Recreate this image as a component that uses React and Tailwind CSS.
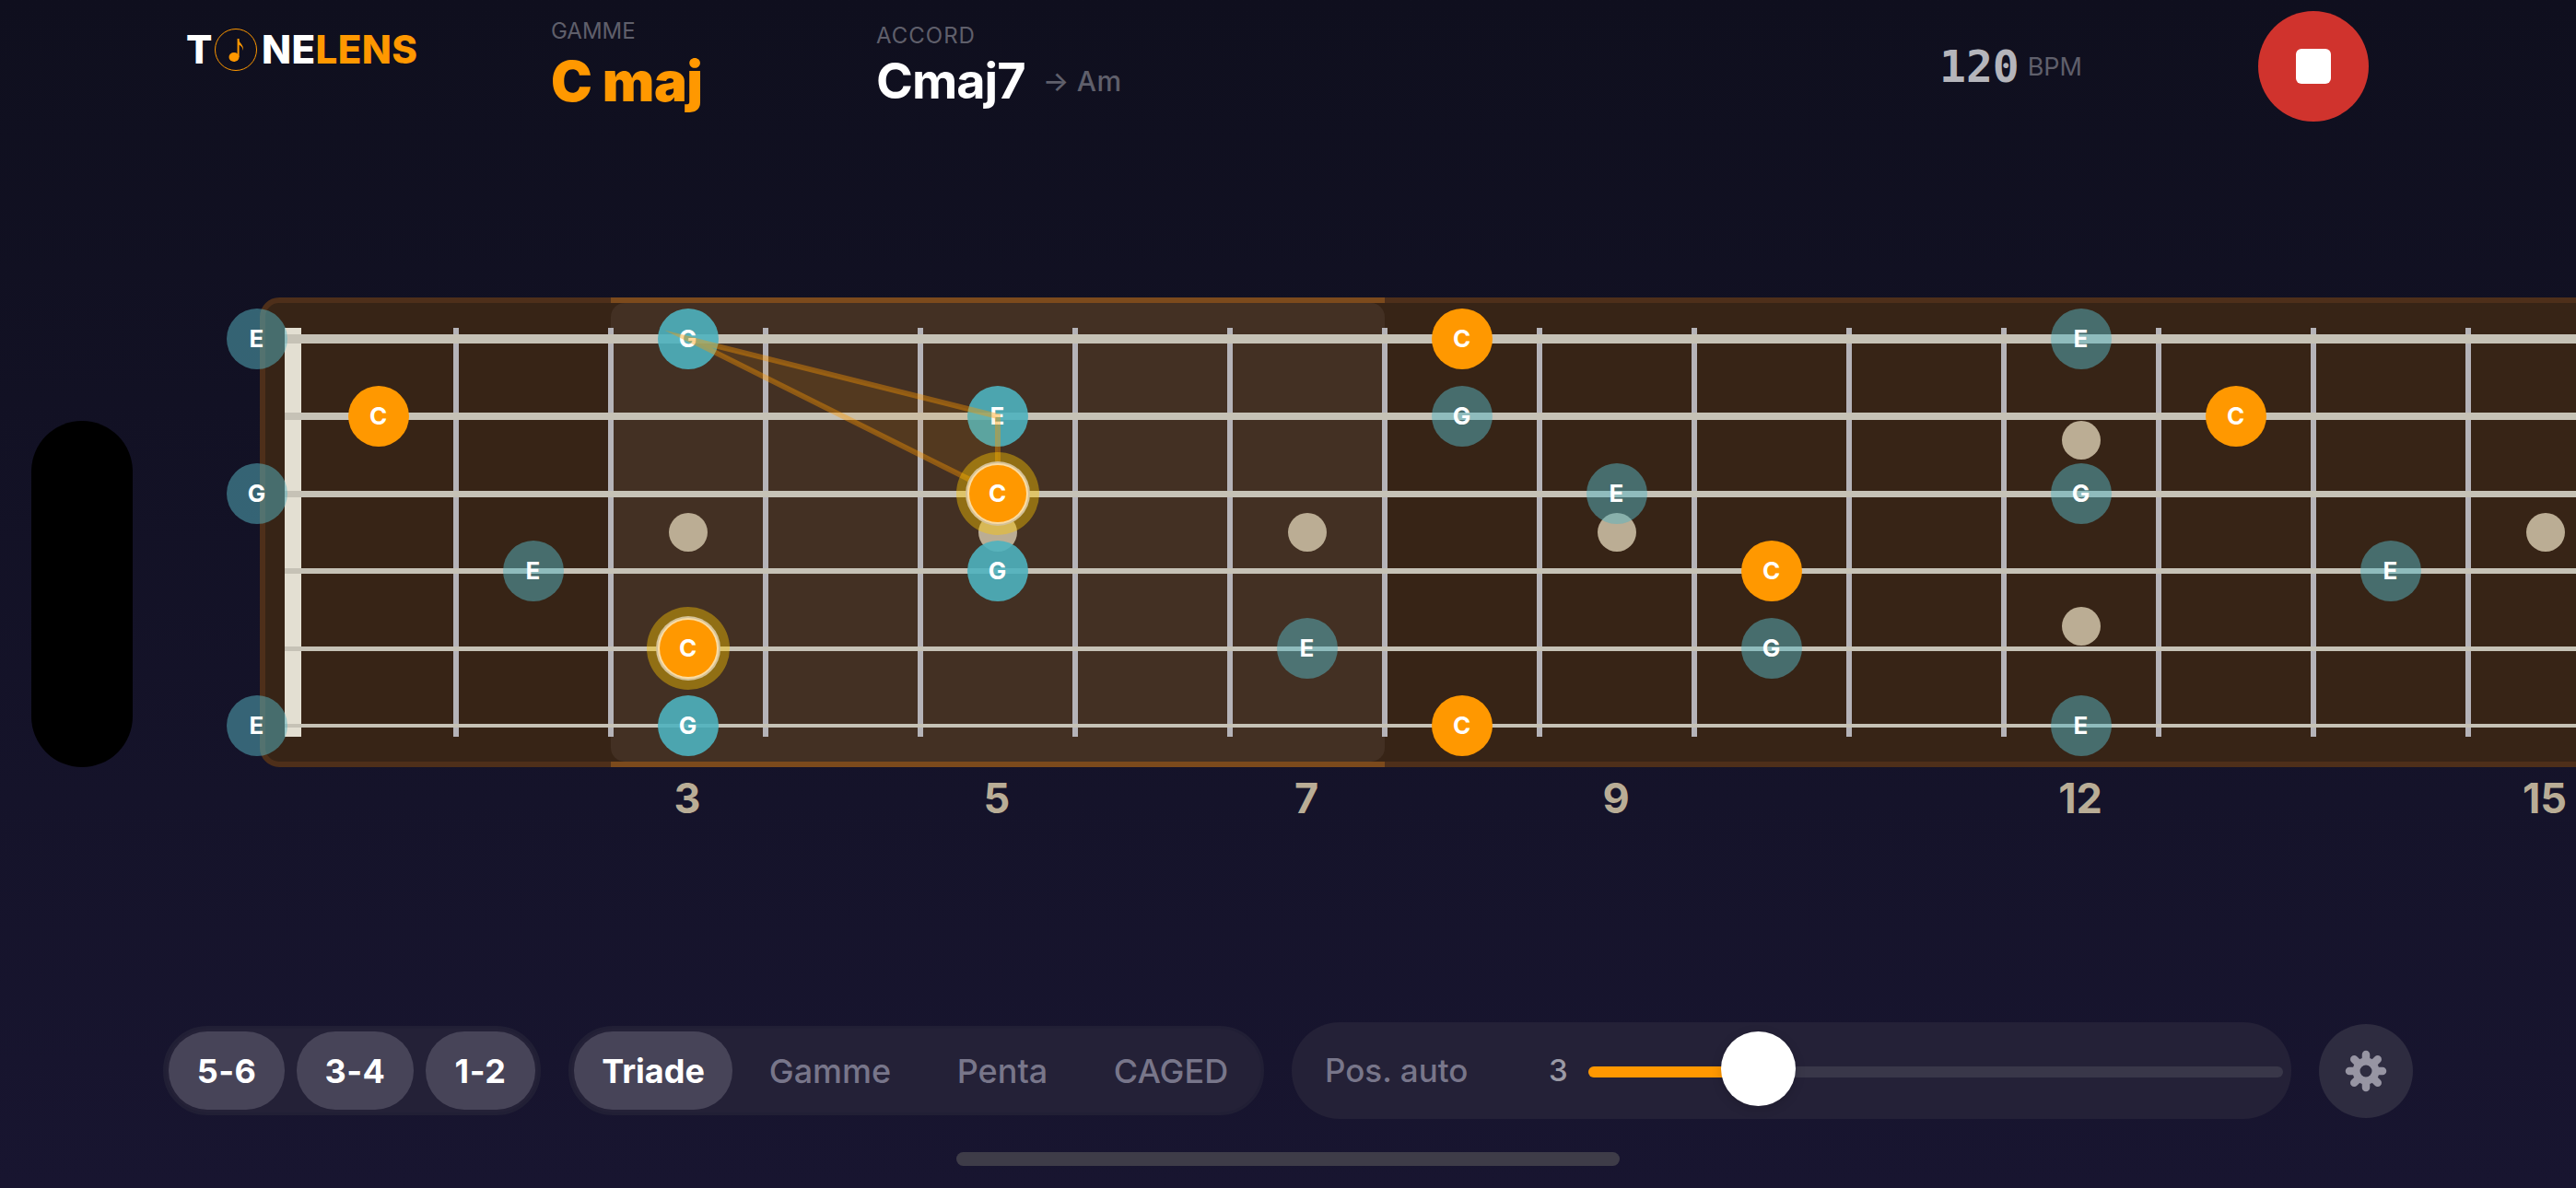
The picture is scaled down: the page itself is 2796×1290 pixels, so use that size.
import React from "react";

const OX = 288;
const OY = 329;
const stringHeights = [10, 8, 7, 6, 5, 4];
const stringY = (s) => 368 + 84 * s - OY;
const regionX = (r) => (r === 0 ? 279 : 411 + 168 * (r - 1)) - OX;
const fretLines = Array.from({ length: 14 }, (_, i) => i);

const dim = [
  [0, 0, "E"], [0, 12, "E"], [1, 8, "G"], [2, 0, "G"], [2, 9, "E"], [2, 12, "G"],
  [3, 2, "E"], [3, 14, "E"], [4, 7, "E"], [4, 10, "G"], [5, 0, "E"], [5, 12, "E"],
];
const active = [[0, 3, "G"], [1, 5, "E"], [3, 5, "G"], [5, 3, "G"]];
const orange = [[0, 8, "C"], [1, 1, "C"], [1, 13, "C"], [3, 10, "C"], [5, 8, "C"]];
const halo = [[2, 5, "C"], [4, 3, "C"]];
const markers = [
  [3, 578], [5, 578], [7, 578], [9, 578], [15, 578], [12, 478], [12, 680],
];
const labels = [3, 5, 7, 9, 12, 15];

function Note({ s, r, n, cls }) {
  return (
    <div
      className={`absolute flex items-center justify-center rounded-full text-[26px] font-bold leading-none text-white ${cls}`}
      style={{ left: regionX(r), top: stringY(s), transform: "translate(-50%,-50%)" }}
    >
      <span className="-ml-[1px]">{n}</span>
    </div>
  );
}

function Gear() {
  const teeth = [0, 45, 90, 135, 180, 225, 270, 315];
  return (
    <svg width="46" height="46" viewBox="-23 -23 46 46" fill="none" stroke="#9795a3">
      <circle r="10.5" strokeWidth="8" />
      {teeth.map((a) => (
        <line key={a} x1="0" y1="-13" x2="0" y2="-18" strokeWidth="8.5" strokeLinecap="round" transform={`rotate(${a})`} />
      ))}
    </svg>
  );
}

function Logo() {
  return (
    <div className="flex h-[108px] w-[395px] items-center text-[42px] font-extrabold leading-none tracking-[0.4px] text-white">
      <span className="-ml-[1px] w-[27px]">T</span>
      <span className="ml-[4px] mr-[5px] flex h-[46px] w-[46px] items-center justify-center rounded-full border-[1.5px] border-[#ff9800]">
        <svg width="24" height="30" viewBox="0 0 24 30" fill="#ff9800">
          <ellipse cx="10" cy="23" rx="5.5" ry="5" />
          <rect x="13.6" y="3" width="2" height="20" />
          <path d="M15 3c0 5 6 6 5 13-.6-4-3-6-5-6.500z" />
        </svg>
      </span>
      <span>NE</span>
      <span className="text-[#ff9800]">LENS</span>
    </div>
  );
}

function Header() {
  return (
    <header className="flex h-[144px] items-start pl-[203px]">
      <Logo />
      <div className="w-[353px] pt-[22px]">
        <div className="text-[24px] leading-[24px] text-[#5f5f6b]">GAMME</div>
        <div className="mt-[12px] text-[60px] font-black leading-[60px] tracking-[-0.5px] text-[#ff9800]">C maj</div>
      </div>
      <div className="w-[1157px] pt-[27px]">
        <div className="text-[24px] leading-[24px] tracking-[1px] text-[#5f5f6b]">ACCORD</div>
        <div className="mt-[7px] flex h-[60px] items-center">
          <span className="text-[54px] font-bold leading-none tracking-[-1px] text-white">Cmaj7</span>
          <span className="ml-[19px] text-[30px] font-medium leading-none tracking-[0.3px] text-[#5f5f6b]">→ Am</span>
        </div>
      </div>
      <div className="flex h-[144px] w-[343px] items-center">
        <span className="-ml-[3px] font-['DejaVu_Sans_Mono',monospace] text-[48px] font-bold leading-none text-[#b5b5bb]">120</span>
        <span className="ml-[9px] text-[27px] leading-none text-[#5f5f6b]">BPM</span>
      </div>
      <button className="mt-[12px] flex h-[120px] w-[120px] items-center justify-center rounded-full bg-[#d0332d]">
        <span className="h-[38px] w-[38px] rounded-[6px] bg-white" />
      </button>
    </header>
  );
}

function Fretboard() {
  return (
    <div className="relative ml-[282px] mt-[179px] h-[510px] w-[2600px] rounded-[21px] border-[6px] border-[#4e2f1a] bg-[#372416]">
      <div className="absolute -bottom-[6px] -top-[6px] left-[375px] w-[840px] border-y-[6px] border-[#7c4a1c]">
        <div className="h-full rounded-[15px] bg-[#433023]" />
      </div>

      <div className="absolute left-[21px] top-[27px] h-[444px] w-[18px] bg-[#e3dfd2]" />
      {fretLines.map((i) => (
        <div key={i} className="absolute top-[27px] h-[444px] w-[6px] bg-[#b5b3b8]" style={{ left: 204 + 168 * i }} />
      ))}
      {stringHeights.map((h, s) => (
        <div
          key={s}
          className="absolute left-[21px] right-0 bg-[#c6c2b6]"
          style={{ top: stringY(s) - h / 2, height: h }}
        />
      ))}

      {markers.map(([r, y], i) => (
        <div
          key={i}
          className="absolute h-[42px] w-[42px] rounded-full bg-[#bbad94]"
          style={{ left: regionX(r) - 21, top: y - OY - 21 }}
        />
      ))}

      {dim.map(([s, r, n], i) => (
        <Note key={i} s={s} r={r} n={n} cls="h-[66px] w-[66px] bg-[rgba(87,182,196,0.5)]" />
      ))}
      {active.map(([s, r, n], i) => (
        <Note key={i} s={s} r={r} n={n} cls="h-[66px] w-[66px] bg-[rgba(78,178,191,0.9)]" />
      ))}

      <svg className="absolute left-0 top-0" width="1000" height="300" viewBox="0 0 1000 300">
        <polygon
          points="459,39 795,123 795,207"
          fill="rgba(255,152,0,0.09)"
          stroke="rgba(255,152,0,0.4)"
          strokeWidth="6"
          strokeMiterlimit="20"
        />
      </svg>

      {orange.map(([s, r, n], i) => (
        <Note key={i} s={s} r={r} n={n} cls="h-[66px] w-[66px] bg-[#ff9800]" />
      ))}
      {halo.map(([s, r, n], i) => (
        <Note
          key={i}
          s={s}
          r={r}
          n={n}
          cls="h-[62px] w-[62px] bg-[#ff9800] shadow-[0_0_0_2px_#fbdca2,0_0_0_4px_#d4c197,0_0_0_14px_rgba(255,200,0,0.42)]"
        />
      ))}
    </div>
  );
}

function FretLabels() {
  return (
    <div className="relative h-[68px]">
      {labels.map((r) => (
        <span
          key={r}
          className="absolute top-0 -ml-[1px] text-[45px] font-bold leading-[68px] text-[#b9ad96]"
          style={{ left: regionX(r) + OX, transform: "translateX(-50%)" }}
        >
          {r}
        </span>
      ))}
    </div>
  );
}

function Footer() {
  const seg = "flex h-[85px] shrink-0 items-center justify-center rounded-[42px] text-[36px] leading-none";
  return (
    <footer className="mt-[209px] flex h-[105px] items-center gap-[30px] pl-[177px]">
      <div className="flex h-[97px] w-[410px] items-center gap-[13px] rounded-[48px] border-[3px] border-[#211f35] bg-[#242137] p-[3px]">
        <div className={`${seg} w-[126px] bg-[#474458] font-bold tracking-[0.5px] text-white`}>5-6</div>
        <div className={`${seg} w-[127px] bg-[#474458] font-bold tracking-[0.5px] text-white`}>3-4</div>
        <div className={`${seg} w-[119px] bg-[#474458] font-bold tracking-[0.5px] text-white`}>1-2</div>
      </div>
      <div className="flex h-[97px] w-[755px] items-center rounded-[48px] border-[3px] border-[#211f35] bg-[#242137] p-[3px]">
        <div className={`${seg} w-[172px] bg-[#474458] font-bold text-white`}>Triade</div>
        <div className={`${seg} ml-[12px] w-[188px] font-medium text-[#78768a]`}>Gamme</div>
        <div className={`${seg} ml-[16px] w-[154px] font-medium text-[#78768a]`}>Penta</div>
        <div className={`${seg} ml-[15px] w-[182px] font-medium text-[#78768a]`}>CAGED</div>
      </div>
      <div className="flex h-[105px] w-[1085px] items-center rounded-[52px] bg-[#242137] pl-[36px]">
        <span className="w-[243px] text-[35px] font-medium leading-none text-[#78768a]">Pos. auto</span>
        <span className="w-[43px] text-[33px] font-medium leading-none text-[#9b9aa6]">3</span>
        <div className="relative mt-[3px] h-[12px] w-[754px] rounded-[6px] bg-[#393749]">
          <div className="h-full w-[156px] rounded-[6px] bg-[#ff9800]" />
          <div className="absolute -top-[38px] left-[144px] h-[81px] w-[81px] rounded-full bg-white shadow-[0_3px_12px_rgba(0,0,0,0.15)]" />
        </div>
      </div>
      <button className="flex h-[102px] w-[102px] items-center justify-center rounded-full bg-[#2e2c40]">
        <Gear />
      </button>
    </footer>
  );
}

export default function App() {
  return (
    <div className="relative h-[1290px] w-[2796px] overflow-hidden bg-gradient-to-b from-[#0f0f1e] to-[#181530] font-['Inter',sans-serif]">
      <div className="absolute left-[34px] top-[457px] h-[376px] w-[110px] rounded-[55px] bg-black" />
      <Header />
      <Fretboard />
      <FretLabels />
      <Footer />
      <div className="ml-[1038px] mt-[36px] h-[15px] w-[720px] rounded-[8px] bg-[#3e3c48]" />
    </div>
  );
}
